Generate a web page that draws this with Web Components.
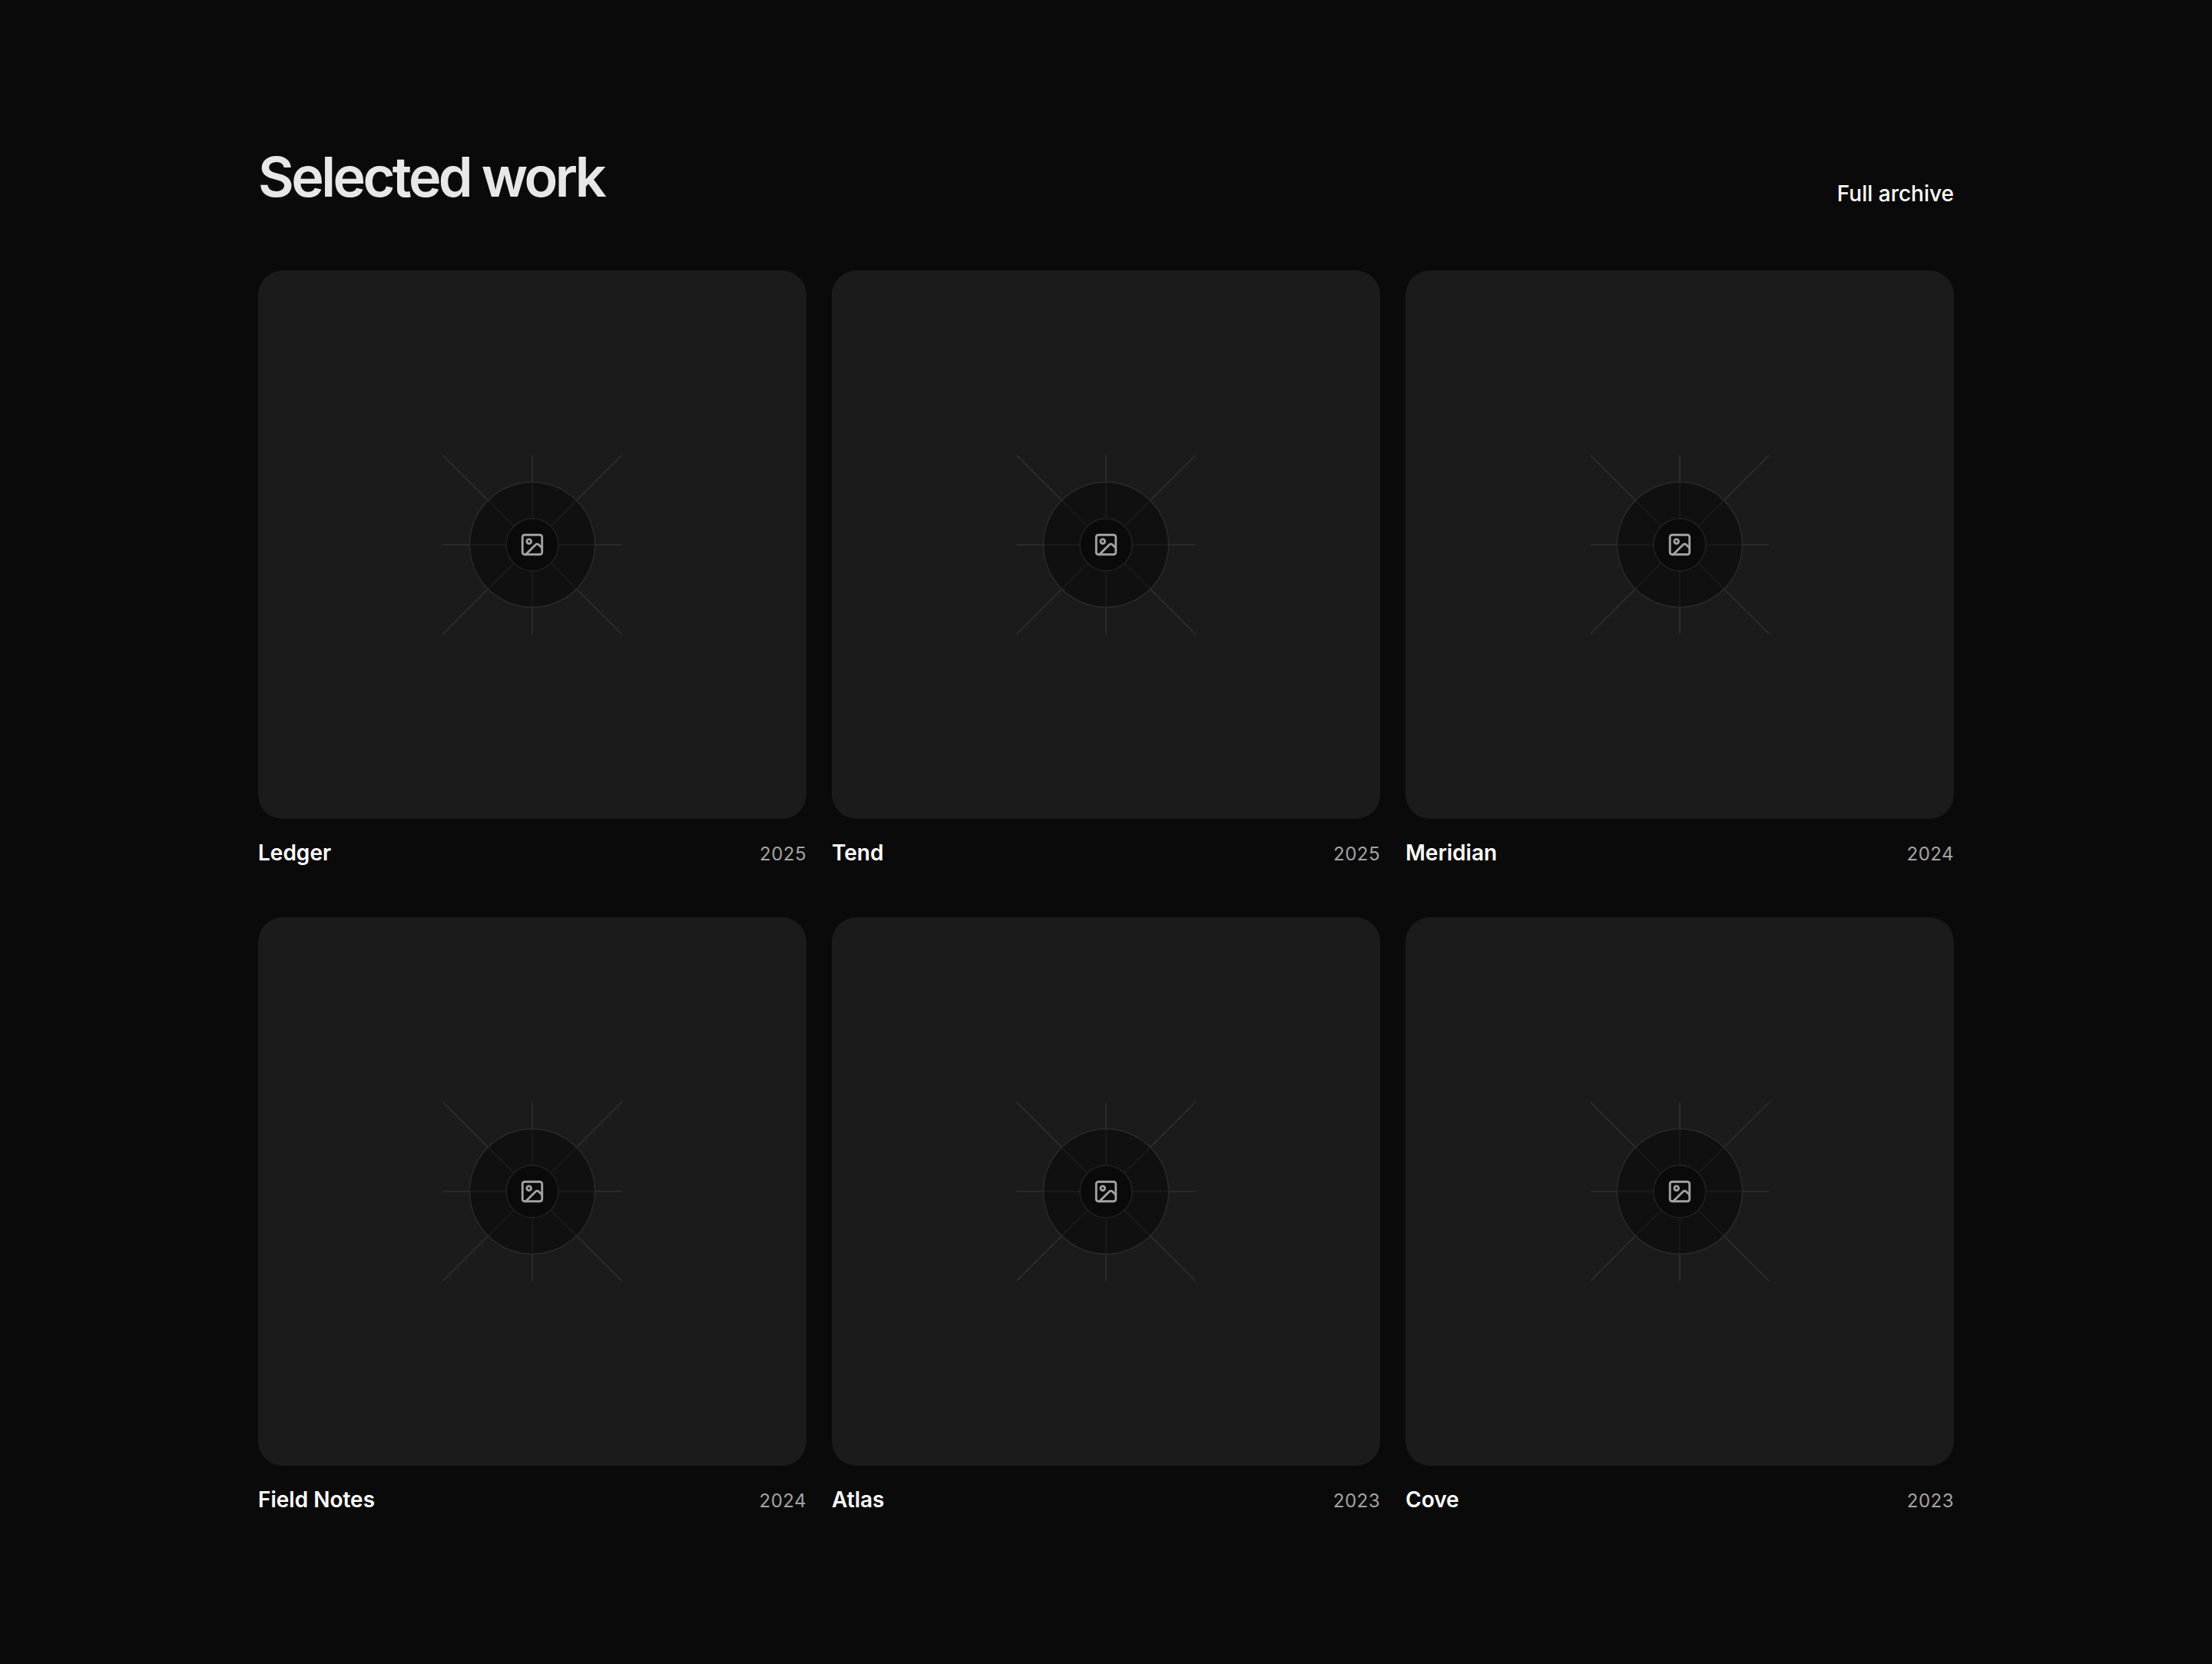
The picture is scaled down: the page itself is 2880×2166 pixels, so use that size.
<!DOCTYPE html>
<html lang="en">
<head>
<meta charset="utf-8">
<title>Selected work</title>
<style>
  html, body { margin: 0; background: #0a0a0a; }
  body { font-family: Inter, "Liberation Sans", sans-serif; }
</style>
</head>
<body>
<work-page>
  <span slot="title">Selected work</span>
  <span slot="link">Full archive</span>
  <work-card name="Ledger" year="2025"></work-card>
  <work-card name="Tend" year="2025"></work-card>
  <work-card name="Meridian" year="2024"></work-card>
  <work-card name="Field Notes" year="2024"></work-card>
  <work-card name="Atlas" year="2023"></work-card>
  <work-card name="Cove" year="2023"></work-card>
</work-page>
<script>
class WorkPage extends HTMLElement {
  constructor () {
    super()
    this.attachShadow({ mode: 'open' })
  }
  connectedCallback () {
    this.shadowRoot.innerHTML = `
    <style>
      :host { display: block; box-sizing: border-box; min-height: 2166px; padding: 190px 336px 0; color: #fff; }
      header { display: flex; justify-content: space-between; align-items: flex-end; margin-bottom: 82px; }
      h1 { margin: 0; font-size: 72px; line-height: 80px; font-weight: 600; letter-spacing: -3.6px; color: #fff; opacity: .9; }
      a { font-size: 28px; line-height: 36px; font-weight: 500; color: #fff; text-decoration: none; }
      .grid { display: grid; grid-template-columns: repeat(3, 714px); justify-content: space-between; row-gap: 64px; }
    </style>
    <header>
      <h1><slot name="title"></slot></h1>
      <a href="#"><slot name="link"></slot></a>
    </header>
    <div class="grid"><slot></slot></div>
    `
  }
}

class WorkCard extends HTMLElement {
  constructor () {
    super()
    this.attachShadow({ mode: 'open' })
  }
  connectedCallback () {
    this.shadowRoot.innerHTML = `
    <style>
      :host { display: block; min-width: 0; }
      .thumb { aspect-ratio: 1; border-radius: 32px; background: #1b1b1b; display: flex; align-items: center; justify-content: center; }
      svg { display: block; }
      .caption { display: flex; justify-content: space-between; align-items: baseline; margin-top: 24px; }
      .name { font-size: 28px; line-height: 40px; font-weight: 600; color: #fff; }
      .year { font-size: 24px; line-height: 36px; letter-spacing: .48px; color: #a3a3a3; }
    </style>
    <div class="thumb">
      <svg width="236" height="236" viewBox="-118 -118 236 236" fill="none">
        <path d="M-116.500-116.500 116.500 116.500M116.500-116.500-116.500 116.500M0-116.500V116.500M-116.500 0H116.500" stroke="#303030" stroke-width="1.5"/>
        <circle r="81.500" fill="#000" fill-opacity=".4"/>
        <circle r="81.500" stroke="#2a2a2a" stroke-width="1.5"/>
        <circle r="34" fill="#0a0a0a" stroke="#222" stroke-width="1.5"/>
        <svg x="-17" y="-17" width="34" height="34" viewBox="0 0 24 24" fill="none" stroke="#a3a3a3" stroke-width="2" stroke-linecap="round" stroke-linejoin="round">
          <rect x="3" y="3" width="18" height="18" rx="2"/>
          <circle cx="9" cy="9" r="2"/>
          <path d="m21 15-3.086-3.086a2 2 0 0 0-2.828 0L6 21"/>
        </svg>
      </svg>
    </div>
    <div class="caption">
      <span class="name">${this.getAttribute('name')}</span>
      <span class="year">${this.getAttribute('year')}</span>
    </div>
    `
  }
}

customElements.define('work-page', WorkPage)
customElements.define('work-card', WorkCard)
</script>
</body>
</html>
